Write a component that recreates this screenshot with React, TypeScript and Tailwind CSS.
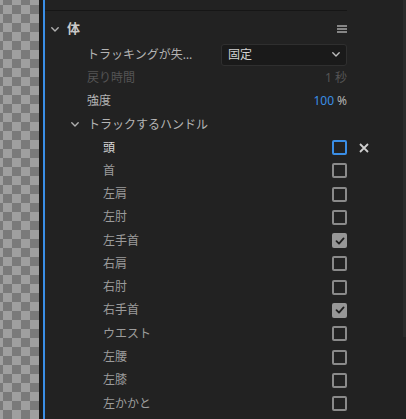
import React from 'react';

type Handle = { label: string; checked?: boolean; focused?: boolean };

const handles: Handle[] = [
  { label: '頭', focused: true },
  { label: '首' },
  { label: '左肩' },
  { label: '左肘' },
  { label: '左手首', checked: true },
  { label: '右肩' },
  { label: '右肘' },
  { label: '右手首', checked: true },
  { label: 'ウエスト' },
  { label: '左腰' },
  { label: '左膝' },
  { label: '左かかと' },
];

const Chevron: React.FC<{ className?: string }> = ({ className }) => (
  <svg viewBox="0 0 8 5" className={className} fill="none">
    <path d="M0.8 0.8 L4 3.9 L7.2 0.8" stroke="currentColor" strokeWidth="1.4" strokeLinecap="round" strokeLinejoin="round" />
  </svg>
);

const Checkbox: React.FC<{ checked?: boolean; focused?: boolean }> = ({ checked, focused }) => {
  if (checked) {
    return (
      <div className="flex h-[15px] w-[15px] items-center justify-center rounded-[2px] bg-[#979797]">
        <svg viewBox="0 0 10 10" className="h-[10px] w-[10px]" fill="none">
          <path d="M1.5 5.2 L4 7.6 L8.6 2.4" stroke="#1e1e1e" strokeWidth="1.8" strokeLinecap="round" strokeLinejoin="round" />
        </svg>
      </div>
    );
  }
  return (
    <div
      className={
        focused
          ? 'h-[15px] w-[15px] rounded-[2px] border-2 border-[#3a8ee6]'
          : 'h-[15px] w-[15px] rounded-[2px] border-2 border-[#8a8a8a]'
      }
    />
  );
};

const App: React.FC = () => {
  return (
    <div
      className="flex h-[419px] w-[406px] overflow-hidden bg-[#222222] text-[12px]"
      style={{ fontFamily: '"Noto Sans", "Noto Sans CJK JP", sans-serif' }}
    >
      {/* transparent canvas */}
      <div className="w-[39px] shrink-0 bg-[conic-gradient(#7a7a7a_25%,#9f9f9f_0_50%,#7a7a7a_0_75%,#9f9f9f_0)] bg-[length:18px_18px] bg-[position:-6px_-4px]" />
      <div className="w-[4px] shrink-0 bg-[#1a1a1a]" />
      <div className="w-[2px] shrink-0 bg-[#3a8ee6]" />

      <div className="flex flex-1 flex-col pr-[56px]">
        <div className="h-[10px]" />
        <div className="h-px bg-[#161616]" />

        {/* section header */}
        <div className="flex h-[32px] items-center pt-[4px] text-[#c9c9c9]">
          <Chevron className="ml-[6px] h-[5px] w-[8px] text-[#b0b0b0]" />
          <span className="ml-[8px] font-bold text-[13px]">体</span>
          <svg viewBox="0 0 10 8" className="ml-auto h-[8px] w-[10px]" fill="none">
            <path d="M0 1 H10 M0 4 H10 M0 7 H10" stroke="#a8a8a8" strokeWidth="1.3" />
          </svg>
        </div>

        <div className="flex h-[23px] items-center pl-[42px]">
          <span className="flex-1 text-[#b4b4b4]">トラッキングが失…</span>
          <div className="flex h-[22px] w-[126px] items-center rounded-[3px] border border-[#2f2f2f] bg-[#1a1a1a] pl-[6px] pr-[6px] text-[#d2d2d2]">
            <span className="flex-1">固定</span>
            <Chevron className="h-[5px] w-[8px] text-[#bdbdbd]" />
          </div>
        </div>

        <div className="flex h-[23px] items-center pl-[42px] text-[#555555]">
          <span className="flex-1">戻り時間</span>
          <span>1 秒</span>
        </div>

        <div className="flex h-[24px] items-center pl-[42px] text-[#b4b4b4]">
          <span className="flex-1">強度</span>
          <span className="text-[#3a8ee6]">100</span>
          <span className="ml-[3px]">%</span>
        </div>

        <div className="flex h-[23px] items-center text-[#b4b4b4]">
          <Chevron className="ml-[26px] h-[5px] w-[8px] text-[#b0b0b0]" />
          <span className="ml-[9px]">トラックするハンドル</span>
        </div>

        {handles.map((h) => (
          <div key={h.label} className="relative flex h-[23.27px] items-center pl-[58px]">
            <span className={h.focused ? 'flex-1 text-[#d6d6d6]' : 'flex-1 text-[#9c9c9c]'}>{h.label}</span>
            <Checkbox checked={h.checked} focused={h.focused} />
            {h.focused && (
              <svg viewBox="0 0 10 10" className="absolute left-[calc(100%+12px)] h-[10px] w-[10px]" fill="none">
                <path d="M1 1 L9 9 M9 1 L1 9" stroke="#cfcfcf" strokeWidth="1.8" />
              </svg>
            )}
          </div>
        ))}
      </div>

      {/* scrollbar */}
      <div className="w-[3px] shrink-0">
        <div className="h-[337px] bg-[#2b2b2b]" />
      </div>
    </div>
  );
};

export default App;
